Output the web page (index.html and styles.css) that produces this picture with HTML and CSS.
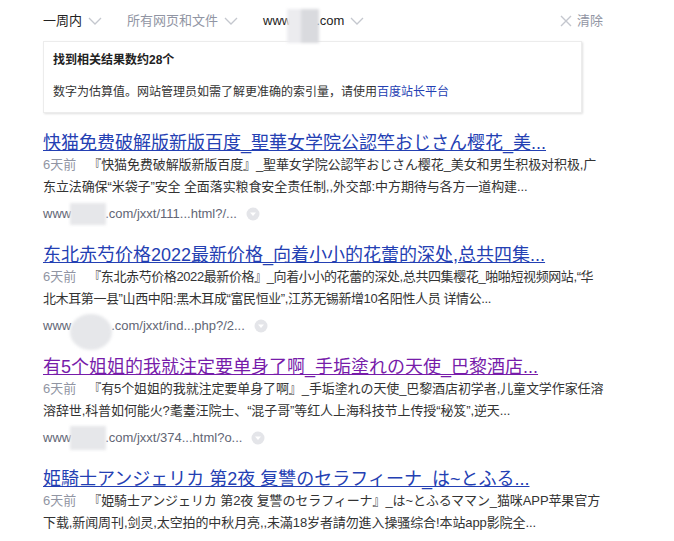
FILE: index.html
```html
<!DOCTYPE html>
<html lang="zh-CN">
<head>
	<meta charset="UTF-8">
	<title>搜索结果</title>
	<link rel="stylesheet" href="styles.css">
</head>
<body>
	<div class="tools">
		<span class="tool">一周内<svg class="arr" width="14" height="8" viewBox="0 0 14 8"><polyline points="1,1 7,7 13,1" fill="none" stroke="#c4c7ce" stroke-width="1.3"/></svg></span>
		<span class="tool gray">所有网页和文件<svg class="arr" width="14" height="8" viewBox="0 0 14 8"><polyline points="1,1 7,7 13,1" fill="none" stroke="#c4c7ce" stroke-width="1.3"/></svg></span>
		<span class="tool">www<i class="mask mask-top"></i>.com<svg class="arr" width="14" height="8" viewBox="0 0 14 8"><polyline points="1,1 7,7 13,1" fill="none" stroke="#c4c7ce" stroke-width="1.3"/></svg></span>
		<span class="clear"><svg width="12" height="12" viewBox="0 0 12 12"><path d="M1 1L11 11M11 1L1 11" stroke="#c4c7ce" stroke-width="1.4"/></svg>清除</span>
	</div>

	<div class="hint">
		<p class="hint-title">找到相关结果数约28个</p>
		<p class="hint-text">数字为估算值。网站管理员如需了解更准确的索引量，请使用<a href="#">百度站长平台</a></p>
	</div>

	<div class="results">
		<div class="result">
			<h3><a href="#">快猫免费破解版新版百度_聖華女学院公認竿おじさん樱花_美...</a></h3>
			<p class="abs"><span class="time">6天前</span>『快猫免费破解版新版百度』_聖華女学院公認竿おじさん樱花_美女和男生积极对积极,广东立法确保“米袋子”安全 全面落实粮食安全责任制,,外交部:中方期待与各方一道构建...</p>
			<p class="url">www<i class="mask"></i>.com/jxxt/111...html?/...<svg class="more" width="14" height="14" viewBox="0 0 14 14"><circle cx="7" cy="7" r="6.5" fill="#e4e5e9"/><path d="M4 5.5H10L7 9Z" fill="#fff"/></svg></p>
		</div>
		<div class="result">
			<h3><a href="#">东北赤芍价格2022最新价格_向着小小的花蕾的深处,总共四集...</a></h3>
			<p class="abs tight"><span class="time">6天前</span>『东北赤芍价格2022最新价格』_向着小小的花蕾的深处,总共四集樱花_啪啪短视频网站,“华北木耳第一县”山西中阳:黑木耳成“富民恒业”,江苏无锡新增10名阳性人员 详情公...</p>
			<p class="url">www<i class="mask mask-big"></i>.com/jxxt/ind...php?/2...<svg class="more" width="14" height="14" viewBox="0 0 14 14"><circle cx="7" cy="7" r="6.5" fill="#e4e5e9"/><path d="M4 5.5H10L7 9Z" fill="#fff"/></svg></p>
		</div>
		<div class="result">
			<h3><a href="#" class="visited">有5个姐姐的我就注定要单身了啊_手垢塗れの天使_巴黎酒店...</a></h3>
			<p class="abs"><span class="time">6天前</span>『有5个姐姐的我就注定要单身了啊』_手垢塗れの天使_巴黎酒店初学者,儿童文学作家任溶溶辞世,科普如何能火?耄耋汪院士、“混子哥”等红人上海科技节上传授“秘笈”,逆天...</p>
			<p class="url">www<i class="mask mask-mid"></i>.com/jxxt/374...html?o...<svg class="more" width="14" height="14" viewBox="0 0 14 14"><circle cx="7" cy="7" r="6.5" fill="#e4e5e9"/><path d="M4 5.5H10L7 9Z" fill="#fff"/></svg></p>
		</div>
		<div class="result">
			<h3><a href="#">姫騎士アンジェリカ 第2夜 复讐のセラフィーナ_は~とふる...</a></h3>
			<p class="abs"><span class="time">6天前</span>『姫騎士アンジェリカ 第2夜 复讐のセラフィーナ』_は~とふるママン_猫咪APP苹果官方下载,新闻周刊,剑灵,太空拍的中秋月亮,,未滿18岁者請勿進入操骚综合!本站app影院全...</p>
		</div>
	</div>
</body>
</html>
```

FILE: styles.css
```css
body,div,p,h3{margin: 0;padding: 0}
body{font: 13px/1.5 "Liberation Sans", Arial, "Noto Sans CJK SC", sans-serif;color: #333;background: #fff;}
a{color: #2440b3;}

.tools{display: flex;align-items: center;height: 41px;padding-left: 43px;width: 560px;}
.tool{display: flex;align-items: center;margin-right: 25px;color: #222;}
.tool.gray{color: #9195a3;}
.arr{margin-left: 6px;}
.mask{display: inline-block;width: 34px;height: 34px;background: linear-gradient(90deg, #ececef 0, #ececef 45%, #d9dade 45%, #d9dade 100%);filter: blur(1.5px);}
.mask-top{position: relative;top: 5px;z-index: 1;margin: 0 -3px 0 -4px;width: 32px;}
.clear{display: flex;align-items: center;margin-left: auto;color: #9195a3;}
.clear svg{margin-right: 5px;}

.hint{width: 518px;margin-left: 43px;padding: 8px 10px 10px 9px;border: 1px solid #ececec;box-shadow: 1px 1px 2px rgba(0,0,0,.12);font-size: 12px;line-height: 20px;}
.hint-title{font-weight: 700;color: #222;}
.hint-text{margin-top: 12px;color: #333;}
.hint-text a{text-decoration: none;}

.results{width: 562px;margin: 19px 0 0 43px;}
.result{margin-bottom: 18px;}
.result h3{font-size: 18px;font-weight: 400;line-height: 22px;white-space: nowrap;}
.result h3 a{text-decoration: underline;}
.result h3 a.visited{color: #771caa;}
.abs{line-height: 22px;letter-spacing: -0.1px;}
.abs.tight{letter-spacing: -0.4px;}
.time{color: #9195a3;margin-right: 12px;letter-spacing: 0;}
.url{margin-top: 4px;line-height: 24px;color: #626675;display: flex;align-items: center;}
.url .mask{width: 36px;height: 22px;background: #e6e7ea;margin: 0 -1px;}
.url .mask-big{width: 42px;height: 36px;border-radius: 50%;margin: -6px -1px -6px -1px;transform: translateY(6px);}
.url .mask-mid{width: 36px;height: 24px;}
.more{margin-left: 9px;}
```
